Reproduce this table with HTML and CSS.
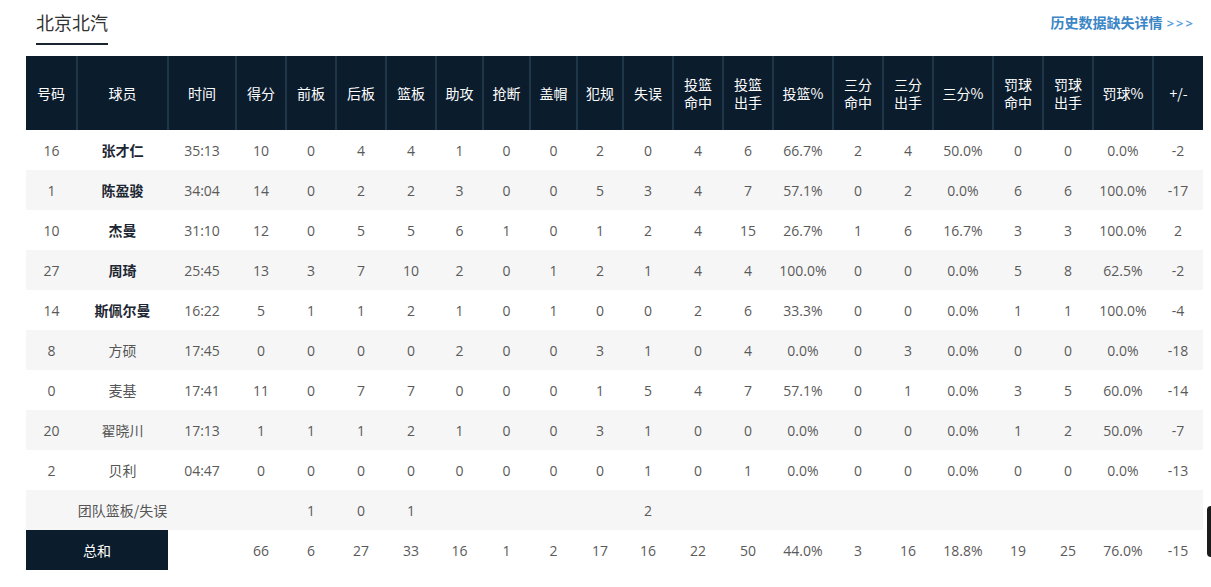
FILE: index.html
```html
<!DOCTYPE html>
<html lang="zh">
<head>
<meta charset="utf-8">
<title>北京北汽</title>
<link rel="stylesheet" href="styles.css">
</head>
<body>
<div class="page">
  <div class="top">
    <div class="title">北京北汽</div>
    <a class="link" href="#">历史数据缺失详情 <span class="arrows">&gt;&gt;&gt;</span></a>
  </div>
  <table class="stats">
    <colgroup>
      <col style="width:51px"><col style="width:91px"><col style="width:68px"><col style="width:50px">
      <col style="width:50px"><col style="width:50px"><col style="width:50px"><col style="width:47px">
      <col style="width:47px"><col style="width:47px"><col style="width:46px"><col style="width:50px">
      <col style="width:50px"><col style="width:50px"><col style="width:60px"><col style="width:50px">
      <col style="width:50px"><col style="width:60px"><col style="width:50px"><col style="width:50px">
      <col style="width:60px"><col style="width:50px">
    </colgroup>
    <thead>
      <tr>
        <th>号码</th><th>球员</th><th>时间</th><th>得分</th><th>前板</th><th>后板</th><th>篮板</th><th>助攻</th><th>抢断</th><th>盖帽</th><th>犯规</th><th>失误</th>
        <th>投篮<br>命中</th><th>投篮<br>出手</th><th>投篮%</th><th>三分<br>命中</th><th>三分<br>出手</th><th>三分%</th><th>罚球<br>命中</th><th>罚球<br>出手</th><th>罚球%</th><th>+/-</th>
      </tr>
    </thead>
    <tbody>
      <tr><td>16</td><td class="name starter">张才仁</td><td>35:13</td><td>10</td><td>0</td><td>4</td><td>4</td><td>1</td><td>0</td><td>0</td><td>2</td><td>0</td><td>4</td><td>6</td><td>66.7%</td><td>2</td><td>4</td><td>50.0%</td><td>0</td><td>0</td><td>0.0%</td><td>-2</td></tr>
      <tr><td>1</td><td class="name starter">陈盈骏</td><td>34:04</td><td>14</td><td>0</td><td>2</td><td>2</td><td>3</td><td>0</td><td>0</td><td>5</td><td>3</td><td>4</td><td>7</td><td>57.1%</td><td>0</td><td>2</td><td>0.0%</td><td>6</td><td>6</td><td>100.0%</td><td>-17</td></tr>
      <tr><td>10</td><td class="name starter">杰曼</td><td>31:10</td><td>12</td><td>0</td><td>5</td><td>5</td><td>6</td><td>1</td><td>0</td><td>1</td><td>2</td><td>4</td><td>15</td><td>26.7%</td><td>1</td><td>6</td><td>16.7%</td><td>3</td><td>3</td><td>100.0%</td><td>2</td></tr>
      <tr><td>27</td><td class="name starter">周琦</td><td>25:45</td><td>13</td><td>3</td><td>7</td><td>10</td><td>2</td><td>0</td><td>1</td><td>2</td><td>1</td><td>4</td><td>4</td><td>100.0%</td><td>0</td><td>0</td><td>0.0%</td><td>5</td><td>8</td><td>62.5%</td><td>-2</td></tr>
      <tr><td>14</td><td class="name starter">斯佩尔曼</td><td>16:22</td><td>5</td><td>1</td><td>1</td><td>2</td><td>1</td><td>0</td><td>1</td><td>0</td><td>0</td><td>2</td><td>6</td><td>33.3%</td><td>0</td><td>0</td><td>0.0%</td><td>1</td><td>1</td><td>100.0%</td><td>-4</td></tr>
      <tr><td>8</td><td class="name">方硕</td><td>17:45</td><td>0</td><td>0</td><td>0</td><td>0</td><td>2</td><td>0</td><td>0</td><td>3</td><td>1</td><td>0</td><td>4</td><td>0.0%</td><td>0</td><td>3</td><td>0.0%</td><td>0</td><td>0</td><td>0.0%</td><td>-18</td></tr>
      <tr><td>0</td><td class="name">麦基</td><td>17:41</td><td>11</td><td>0</td><td>7</td><td>7</td><td>0</td><td>0</td><td>0</td><td>1</td><td>5</td><td>4</td><td>7</td><td>57.1%</td><td>0</td><td>1</td><td>0.0%</td><td>3</td><td>5</td><td>60.0%</td><td>-14</td></tr>
      <tr><td>20</td><td class="name">翟晓川</td><td>17:13</td><td>1</td><td>1</td><td>1</td><td>2</td><td>1</td><td>0</td><td>0</td><td>3</td><td>1</td><td>0</td><td>0</td><td>0.0%</td><td>0</td><td>0</td><td>0.0%</td><td>1</td><td>2</td><td>50.0%</td><td>-7</td></tr>
      <tr><td>2</td><td class="name">贝利</td><td>04:47</td><td>0</td><td>0</td><td>0</td><td>0</td><td>0</td><td>0</td><td>0</td><td>0</td><td>1</td><td>0</td><td>1</td><td>0.0%</td><td>0</td><td>0</td><td>0.0%</td><td>0</td><td>0</td><td>0.0%</td><td>-13</td></tr>
      <tr class="team"><td></td><td class="name">团队篮板/失误</td><td></td><td></td><td>1</td><td>0</td><td>1</td><td></td><td></td><td></td><td></td><td>2</td><td></td><td></td><td></td><td></td><td></td><td></td><td></td><td></td><td></td><td></td></tr>
      <tr class="total"><td colspan="2" class="total-label">总和</td><td></td><td>66</td><td>6</td><td>27</td><td>33</td><td>16</td><td>1</td><td>2</td><td>17</td><td>16</td><td>22</td><td>50</td><td>44.0%</td><td>3</td><td>16</td><td>18.8%</td><td>19</td><td>25</td><td>76.0%</td><td>-15</td></tr>
    </tbody>
  </table>
</div>
<div class="side-tab"></div>
</body>
</html>
```

FILE: styles.css
```css
html, body {
  margin: 0;
  padding: 0;
  background: #ffffff;
}

body {
  font-family: "Open Sans", "Noto Sans CJK SC", sans-serif;
  color: #555555;
  width: 1211px;
  height: 587px;
  overflow: hidden;
  position: relative;
}

.page {
  padding: 0 0 0 26px;
}

.top {
  display: flex;
  justify-content: space-between;
  align-items: flex-start;
  height: 56px;
  padding-left: 10px;
  padding-right: 16px;
  box-sizing: border-box;
}

.title {
  font-family: "Noto Sans CJK SC", sans-serif;
  font-size: 18px;
  line-height: 24px;
  color: #333333;
  padding-top: 10px;
  padding-bottom: 9px;
  border-bottom: 2px solid #1a2330;
  width: 72px;
  white-space: nowrap;
}

.link {
  font-family: "Noto Sans CJK SC", sans-serif;
  font-size: 14px;
  font-weight: 700;
  line-height: 20px;
  margin-top: 12px;
  color: #3b86c6;
  text-decoration: none;
  white-space: nowrap;
}

.arrows {
  font-family: "Open Sans", sans-serif;
  font-size: 13px;
  color: #5fa3dc;
  font-weight: 700;
  letter-spacing: 2px;
  margin-left: 1px;
}

.stats {
  border-collapse: collapse;
  table-layout: fixed;
  width: 1177px;
}

.stats th {
  background: #0b1c2d;
  color: #ffffff;
  font-family: "Noto Sans CJK SC", sans-serif;
  font-weight: 400;
  font-size: 14px;
  line-height: 18px;
  height: 74px;
  padding: 0;
  text-align: center;
  border-left: 2px solid #1f3548;
}

.stats th:first-child {
  border-left: none;
}

.stats td {
  height: 40px;
  padding: 0;
  text-align: center;
  font-size: 14px;
  color: #5a5a5a;
  white-space: nowrap;
}

.stats tbody tr:nth-child(even) td {
  background: #f6f6f6;
}

.stats td.name {
  font-family: "Noto Sans CJK SC", sans-serif;
  color: #555555;
}

.stats td.starter {
  font-weight: 700;
  color: #1c2733;
}

.stats tr.total td {
  background: #ffffff;
}

.stats tr.total td.total-label {
  background: #0b1c2d;
  color: #ffffff;
  font-family: "Noto Sans CJK SC", sans-serif;
}

.side-tab {
  position: absolute;
  right: 0;
  top: 506px;
  width: 4px;
  height: 51px;
  background: #1b1b1b;
  border-radius: 4px 0 0 4px;
}
```
